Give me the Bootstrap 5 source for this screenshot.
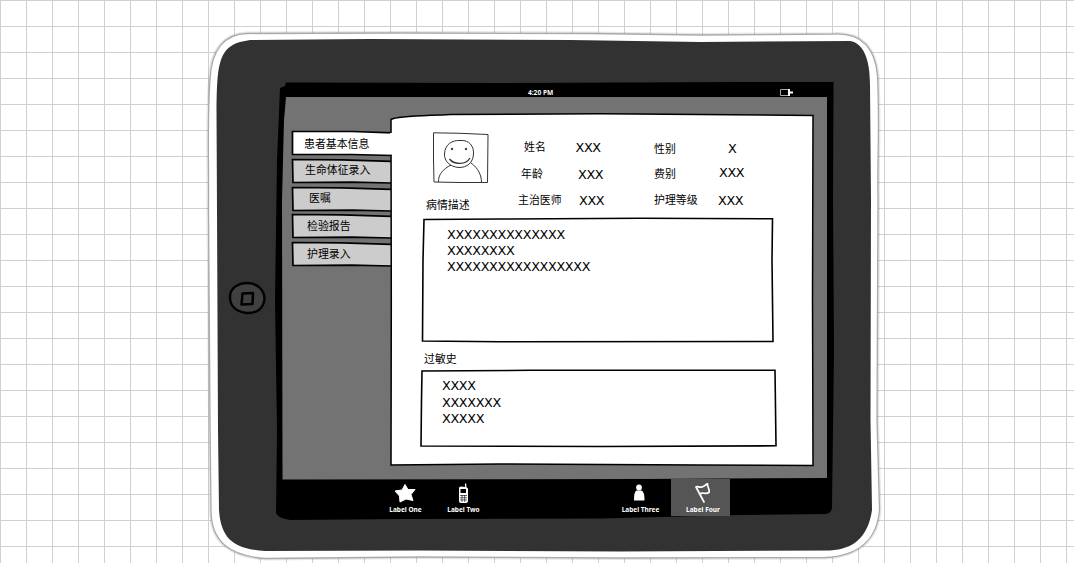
<!DOCTYPE html>
<html lang="zh-CN">
<head>
<meta charset="utf-8">
<meta name="viewport" content="width=device-width, initial-scale=1">
<title>患者基本信息</title>
<link href="https://cdn.jsdelivr.net/npm/bootstrap@5.3.0/dist/css/bootstrap.min.css" rel="stylesheet">
<style>
body{height:563px;overflow:hidden;color:#000;font:10.9px/20px "Liberation Sans","Noto Sans CJK SC",sans-serif;
 background:#fff linear-gradient(#d0d0d0 1px,transparent 1px) 0 0/26px 26px;}
.desk{height:563px;padding:31px 0 0 208px;background:linear-gradient(90deg,#d0d0d0 1px,transparent 1px) 0 0/26px 26px}
.tablet{width:672px;height:530px;padding-top:53px}
.sketch{position:absolute;inset:0;width:100%;height:100%;overflow:visible;z-index:0}
.bezel{width:74px}
.screen{width:545px;height:433px}
.status{height:13px;font:bold 6.6px/17px "Noto Sans",sans-serif;color:#fff;padding-right:34px}
.status .clock{padding-left:246px}
.work{height:382px}
.side{width:109px;padding:34px 0 0 10px}
.side-tab{height:24px;margin-bottom:3.8px;line-height:22px;padding-left:13px;white-space:nowrap}
.side-tab:nth-child(1){padding:2px 0 0 12px}
.side-tab:nth-child(3){padding-left:17px}
.side-tab:nth-child(4),.side-tab:nth-child(5){padding-left:15px;padding-top:1px}
.panel{width:423px;height:353px;margin-top:16px;padding:18px 0 0 29px}
.who{height:86px}
.portrait{width:96px}
.portrait svg{display:block;margin-left:11px}
.facts{display:grid;grid-template-columns:57px 77px 66px 40px;grid-template-rows:27px 26px 26px;padding-top:6px;align-items:start;white-space:nowrap}
.facts .x{margin-top:1px}
.facts .drop{padding-top:2px}
.facts .x.drop{padding-top:1px}
.caption{height:22px;line-height:22px}
.x{font-family:"DejaVu Sans",sans-serif;font-size:12.8px;letter-spacing:-.35px}
.note{line-height:16px}
.note-a{width:353px;height:125px;padding:9px 0 0 25px}
.note-b{width:355px;height:78px;padding:8px 0 0 21px;line-height:16.5px}
.tabbar{height:38px;padding-left:94px;color:#fff;font:bold 6.5px/8px "Noto Sans",sans-serif;white-space:nowrap}
.item{width:58px}
.item svg{height:22px;width:24px;margin-top:4px}
.item span{margin:1px 0 0 1px}
.item.active{background:#555;width:59px;height:37px;margin-left:2px;padding-left:4px}
.spacer{width:119px}
</style>
</head>
<body>
<div class="desk">
<div class="tablet position-relative d-flex align-items-start">
 <svg class="sketch" viewBox="208 31 672 530" aria-hidden="true">
  <path d="M208.500 210C209 160 207 120 210 80C211 49 225 34 247 33.500L400 33L590 33.500L700 35L835 34C863 33 875 50 877.500 75C880 130 877 160 878 200L877 420L879.500 510C877 540 858 556 825 557.500L620 558L420 557L265 558.500C230 556 211 542 211 510L210 420Z" fill="none" stroke="#000" stroke-opacity=".1" stroke-width="4"/>
  <path d="M208.500 210C209 160 207 120 210 80C211 49 225 34 247 33.500L400 33L590 33.500L700 35L835 34C863 33 875 50 877.500 75C880 130 877 160 878 200L877 420L879.500 510C877 540 858 556 825 557.500L620 558L420 557L265 558.500C230 556 211 542 211 510L210 420Z" fill="#fff" stroke="#aaa" stroke-width="1.300"/>
  <path d="M217 210L216.500 110C217 68 218 48 240 42L250 40L370 39L570 40L700 42L850 41C863 43 870 58 870 85L871 200L870.500 420L872 510C868 537 854 549 830 550.500L620 551.500L420 550.500L265 551C235 549 221 540 219 510L218 430Z" fill="#323232"/>
  <path d="M280 88L285 86L286 82.500L500 83L740 82L833.500 82L833 200L834 350L832 507Q832 513 826 514L740 515L600 518.500L400 519L290 520Q277 518 276 513L277 430L275 300L277 160Z" fill="#000"/>
  <path d="M286 97L827 97L827 478L640 479L282.500 479.500L282 200L284 120Z" fill="#737373"/>
  <path d="M230 297C230 288 238 283 247.500 283C258 283 264.500 291 264.500 299C263.500 309 256 313.500 247 313C236 312 230 306 230 297Z" fill="#404040" stroke="#000" stroke-width="2.400"/>
  <path d="M242.500 293.500L253 293L252.500 304L241.500 304.500Z" fill="#404040" stroke="#000" stroke-width="2.500" stroke-linejoin="round"/>
 </svg>
 <div class="bezel"></div>
 <div class="screen position-relative d-flex flex-column">
  <div class="status d-flex justify-content-between">
   <span class="clock">4:20 PM</span>
   <svg width="14" height="9" viewBox="0 0 14 9" class="mt-1"><path d="M1.500 1.500H9.500V7.500H1.500Z" fill="#000" stroke="#aaa"/><path d="M9 1h2v2.500h3v2h-3v2.500h-2z" fill="#fff"/></svg>
  </div>
  <div class="work d-flex align-items-start">
   <nav class="side">
    <div class="side-tab position-relative"><svg class="sketch" viewBox="0 0 99 24" preserveAspectRatio="none"><path d="M.5.500L60 .500L101 1.500V24L.5 23.500Z" fill="#fff"/><path d="M101 1.800L60 .500L.5.500V23.500L60 23.500L101 24.500" fill="none" stroke="#000" stroke-width="1.700"/></svg><span class="position-relative">患者基本信息</span></div>
    <div class="side-tab position-relative"><svg class="sketch" viewBox="0 0 99 24"><path d="M99 2.300L50 .800L.5.500L1 23.500L60 23.200L99 24" fill="#ccc" stroke="#000" stroke-width="1.700"/></svg><span class="position-relative">生命体征录入</span></div>
    <div class="side-tab position-relative"><svg class="sketch" viewBox="0 0 99 24"><path d="M99 2.300L50 .800L.5.500L1 23.500L60 23.200L99 24" fill="#ccc" stroke="#000" stroke-width="1.700"/></svg><span class="position-relative">医嘱</span></div>
    <div class="side-tab position-relative"><svg class="sketch" viewBox="0 0 99 24"><path d="M99 2.300L50 .800L.5.500L1 23.500L60 23.200L99 24" fill="#ccc" stroke="#000" stroke-width="1.700"/></svg><span class="position-relative">检验报告</span></div>
    <div class="side-tab position-relative"><svg class="sketch" viewBox="0 0 99 24"><path d="M99 2.300L50 .800L.5.500L1 23.500L60 23.200L99 24" fill="#ccc" stroke="#000" stroke-width="1.700"/></svg><span class="position-relative">护理录入</span></div>
   </nav>
   <main class="panel position-relative">
    <svg class="sketch" viewBox="391 113 423 353"><path d="M391 119.500C397 116 420 116 450 114.500L600 113.700L700 114.500L813 115.500L812.500 300L813 465.500L700 465L500 464L391 465L391.300 300Z" fill="#fff" stroke="#000" stroke-width="1.500"/><path d="M390 133H393.500V154.500H390Z" fill="#fff"/></svg>
    <div class="position-relative">
     <div class="who d-flex">
      <div class="portrait d-flex flex-column">
       <svg width="58" height="54" viewBox="431 131 58 54" fill="none" stroke="#333" stroke-width="1"><path d="M433.500 132.800L460 133.300L488 134.500L487.500 182.500L460 182.500L434 182L433.500 160Z"/><path d="M444.500 154C445 144 452 140 461 140.500C469 140 474 146 473.500 154C473 163 467 167.500 459 167.500C450 167 444 161 444.500 154Z"/><path d="M451 165C443 169 438 175 438.500 182M471 163C478 168 481.500 175 481.500 182.500"/><path d="M449.500 159C454 165 466 165 470 158" stroke-width="1.300"/><circle cx="452" cy="149" r=".8" fill="#000"/><circle cx="466" cy="149" r=".8" fill="#000"/></svg>
      </div>
      <div class="facts">
       <span class="ms-2">姓名</span><span class="x" style="margin-left:2.500px">XXX</span><span class="drop ms-1">性别</span><span class="x drop" style="margin-left:12px">X</span>
       <span style="margin-left:5px">年龄</span><span class="x" style="margin-left:5px">XXX</span><span class="ms-1">费别</span><span class="x" style="margin-left:3px;margin-top:-1px">XXX</span>
       <span style="margin-left:2px">主治医师</span><span class="x" style="margin-left:6px">XXX</span><span class="ms-1">护理等级</span><span class="x" style="margin-left:2px">XXX</span>
      </div>
     </div>
     <div class="caption" style="margin:-23px 0 2px 6px">病情描述</div>
     <div class="note note-a x position-relative" style="margin-left:2px">
      <svg class="sketch" viewBox="422 218 353 125"><path d="M424 219.500L500 219L640 218.300L772.500 218.800L772 260L773 341.500L500 341.800L422.500 341L423 260Z" fill="none" stroke="#000" stroke-width="1.600"/></svg>
      XXXXXXXXXXXXXX<br>XXXXXXXX<br>XXXXXXXXXXXXXXXXX</div>
     <div class="caption" style="margin:5px 0 0 4px">过敏史</div>
     <div class="note note-b x position-relative" style="margin-left:1px">
      <svg class="sketch" viewBox="421 370 355 78"><path d="M422 371L530 370.300L775 370.300L776 445.800L600 446.500L421 446L421.500 400Z" fill="none" stroke="#000" stroke-width="1.600"/></svg>
      XXXX<br>XXXXXXX<br>XXXXX</div>
    </div>
   </main>
  </div>
  <div class="tabbar d-flex">
   <div class="item d-flex flex-column align-items-center"><svg viewBox="0 0 24 22"><path d="M12 1.500L15 6.500L22 6.500L18 11.500L20 17.500L13 16L7 19L6.500 13L2 8L9 7Z" fill="#fff" stroke="#fff" stroke-linejoin="round"/></svg><span>Label One</span></div>
   <div class="item d-flex flex-column align-items-center"><svg viewBox="0 0 24 22"><path d="M14 4V.5h1.300V4l1.700 1.500V18q0 2-2 2h-5q-2 0-2-2V5q0-1.500 2-1.500z" fill="#fff"/><path d="M9.500 6H15v4H9.500z" fill="#000"/><path d="M9 12.500h7M9 14.700h7M9 16.900h7M11 12v7M13.700 12v7" stroke="#000" stroke-width=".6"/></svg><span>Label Two</span></div>
   <div class="spacer"></div>
   <div class="item d-flex flex-column align-items-center"><svg viewBox="0 0 24 22"><circle cx="11" cy="4.500" r="2.900" fill="#fff"/><path d="M8.500 7.500H13.500Q16.500 8.500 16.500 17.500H6Q6 8.500 8.500 7.500Z" fill="#fff"/></svg><span>Label Three</span></div>
   <div class="item active d-flex flex-column align-items-center"><svg viewBox="0 0 24 22"><path d="M13 19L5 4C7 2.500 8 5 11 4C14 3 14 2 16.500 .500C16 4 19 6 18 9.500C14 12 12 8.500 8.500 11" fill="none" stroke="#fff" stroke-width="1.700" stroke-linejoin="round" stroke-linecap="round"/></svg><span>Label Four</span></div>
  </div>
 </div>
</div>
</div>
<script src="https://cdn.jsdelivr.net/npm/bootstrap@5.3.0/dist/js/bootstrap.bundle.min.js"></script>
</body>
</html>
